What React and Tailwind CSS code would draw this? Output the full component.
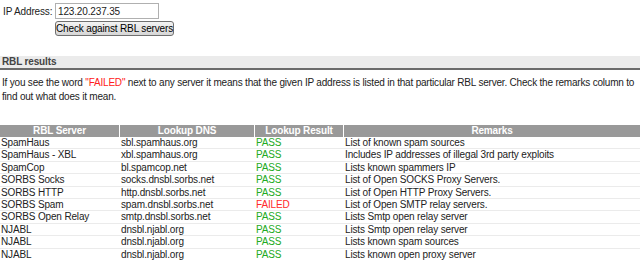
import React from "react";

const rows = [
  ["SpamHaus", "sbl.spamhaus.org", "PASS", "List of known spam sources"],
  ["SpamHaus - XBL", "xbl.spamhaus.org", "PASS", "Includes IP addresses of illegal 3rd party exploits"],
  ["SpamCop", "bl.spamcop.net", "PASS", "Lists known spammers IP"],
  ["SORBS Socks", "socks.dnsbl.sorbs.net", "PASS", "List of Open SOCKS Proxy Servers."],
  ["SORBS HTTP", "http.dnsbl.sorbs.net", "PASS", "List of Open HTTP Proxy Servers."],
  ["SORBS Spam", "spam.dnsbl.sorbs.net", "FAILED", "List of Open SMTP relay servers."],
  ["SORBS Open Relay", "smtp.dnsbl.sorbs.net", "PASS", "Lists Smtp open relay server"],
  ["NJABL", "dnsbl.njabl.org", "PASS", "Lists Smtp open relay server"],
  ["NJABL", "dnsbl.njabl.org", "PASS", "Lists known spam sources"],
  ["NJABL", "dnsbl.njabl.org", "PASS", "Lists known open proxy server"],
];

const App = () => {
  return (
    <div className="w-[640px] h-[260px] overflow-hidden bg-white text-[10px] tracking-[-0.15px] text-[#222] font-['Liberation_Sans',Arial,sans-serif] whitespace-nowrap">
      {/* form */}
      <div className="pt-[3px]">
        <div className="flex items-center h-[16px]">
          <span className="w-[55px] pl-[3px]">IP Address:</span>
          <input
            className="w-[104px] h-[16px] border border-[#b0b0b0] px-[2px] text-[10px] leading-[14px] outline-none"
            defaultValue="123.20.237.35"
          />
        </div>
        <div className="pl-[55px] mt-[2px] h-[15px] flex">
          <button className="h-[15px] w-[119px] border border-[#707070] rounded-[3px] bg-gradient-to-b from-[#f4f4f4] to-[#d6d6d6] text-[10px] leading-[12px] text-black tracking-[-0.15px]">
            Check against RBL servers
          </button>
        </div>
      </div>

      {/* heading */}
      <div className="mt-[20px] h-[14px] bg-[#ebebeb] border-b-2 border-[#6b6b6b] pl-[2px] flex items-center">
        <span className="font-bold text-[#444] leading-[12px]">RBL results</span>
      </div>

      <p className="mt-[6px] pl-[2px] leading-[14px] tracking-[-0.2px]">
        If you see the word <span className="text-[#ff2020]">"FAILED"</span> next to any server it means that the given IP address is listed in that particular RBL server. Check the remarks column to
        <br />
        find out what does it mean.
      </p>

      {/* table */}
      <div className="mt-[21px]">
        <div className="flex h-[12px] bg-[#999999] text-white font-bold leading-[12px]">
          <div className="w-[120px] border-r border-white text-center">RBL Server</div>
          <div className="w-[135px] border-r border-white text-center">Lookup DNS</div>
          <div className="w-[89px] border-r border-white text-center">Lookup Result</div>
          <div className="flex-1 text-center">Remarks</div>
        </div>
        {rows.map((r, i) => (
          <div key={i} className="flex h-[12.4px] border-b border-[#ebebeb] leading-[11px]">
            <div className="w-[120px] pl-[1px]">{r[0]}</div>
            <div className="w-[135px] pl-[1px]">{r[1]}</div>
            <div className={"w-[89px] pl-[1px] " + (r[2] === "PASS" ? "text-[#22aa22]" : "text-[#ff2a2a]")}>{r[2]}</div>
            <div className="flex-1 pl-[1px]">{r[3]}</div>
          </div>
        ))}
      </div>
    </div>
  );
};

export default App;
